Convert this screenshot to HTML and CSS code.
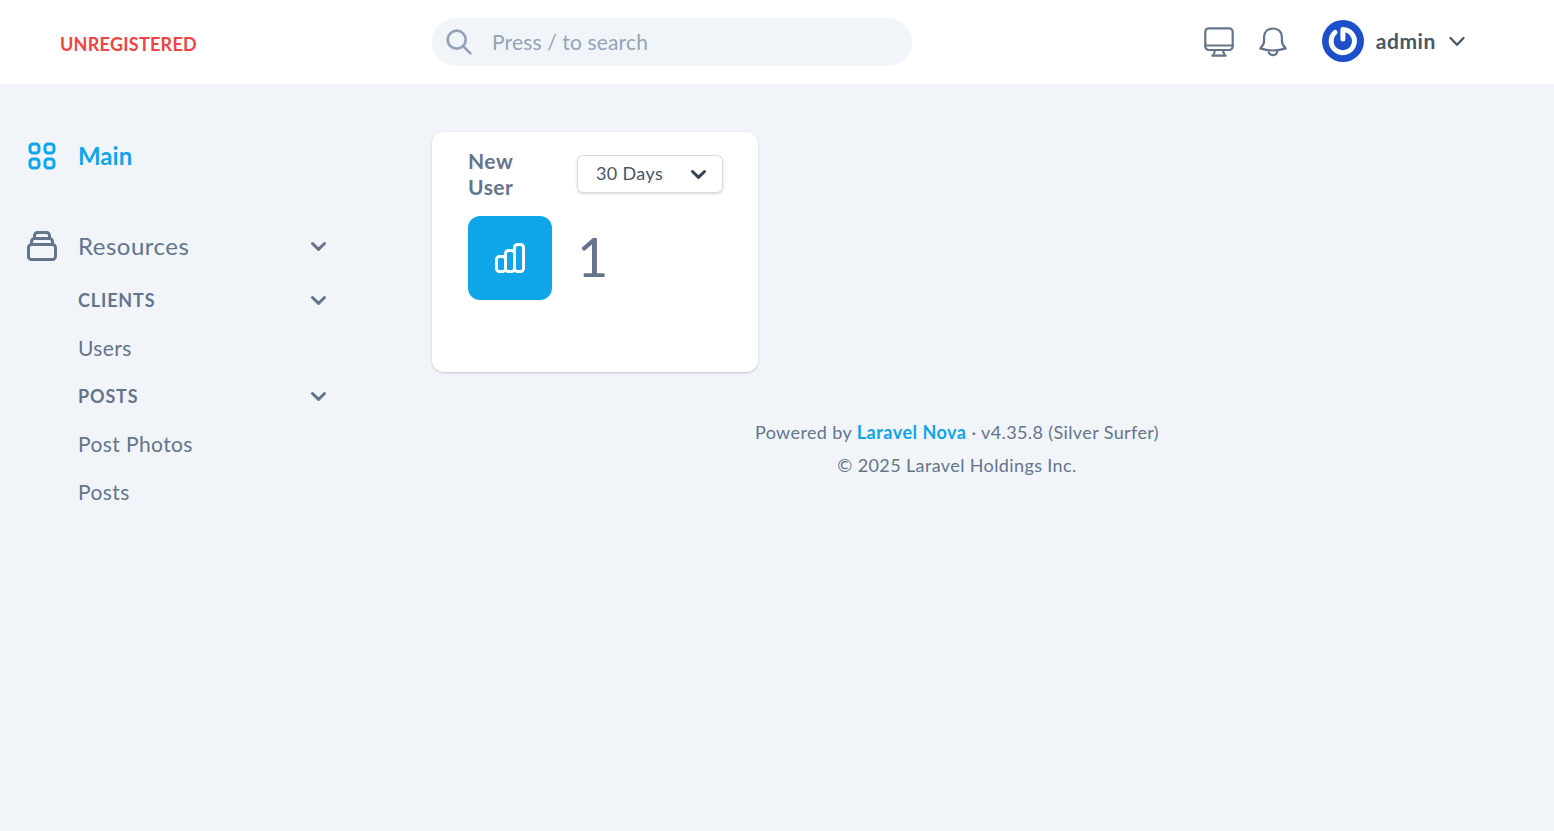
FILE: index.html
```html
<!DOCTYPE html>
<html lang="en">
<head>
<meta charset="utf-8">
<title>Main</title>
<link rel="stylesheet" href="styles.css">
</head>
<body>
<header class="topbar">
  <div class="brand">UNREGISTERED</div>
  <div class="search">
    <svg class="search-icon" width="30" height="30" viewBox="0 0 30 30"><circle cx="12.7" cy="12.7" r="9"/><path d="M19.200 19.200l7.200 7.200"/></svg>
    <span class="search-text">Press / to search</span>
  </div>
  <div class="tools">
    <svg class="tool-icon" width="36" height="36" viewBox="0 0 36 36"><rect x="4.300" y="4.300" width="27.400" height="21.700" rx="3.500"/><path d="M4.300 21.500h27.400M14 26.500l-1.600 5M22 26.500l1.600 5M11.300 31.700h13.400"/></svg>
    <svg class="tool-icon bell" width="36" height="36" viewBox="0 0 36 36"><path d="M18 4.500c-5.500 0-8.900 3.500-8.900 8.500v4c0 3-1.700 5.400-3.800 7.400 7.500 2.600 17.900 2.600 25.400 0-2.100-2-3.800-4.400-3.800-7.400v-4c0-5-3.400-8.500-8.900-8.500zM13.400 26.700c.4 2.900 2.300 4.500 4.600 4.500s4.200-1.600 4.600-4.500"/></svg>
    <svg class="avatar" width="42" height="42" viewBox="0 0 42 42"><circle class="avatar-bg" cx="21" cy="21" r="21"/><path class="avatar-ring" d="M13 12.500A11.600 11.600 0 1 0 20.900 9.500v9.500"/></svg>
    <span class="user-name">admin</span>
    <svg class="user-arrow" width="18" height="18" viewBox="0 0 18 18"><path d="M2.500 5l6.500 6.700 6.500-6.700"/></svg>
  </div>
</header>
<div class="layout">
  <nav class="sidebar">
    <a class="nav-main active">
      <svg class="nav-icon" width="36" height="36" viewBox="0 0 24 24"><path d="M4 6a2 2 0 012-2h2a2 2 0 012 2v2a2 2 0 01-2 2H6a2 2 0 01-2-2V6zM14 6a2 2 0 012-2h2a2 2 0 012 2v2a2 2 0 01-2 2h-2a2 2 0 01-2-2V6zM4 16a2 2 0 012-2h2a2 2 0 012 2v2a2 2 0 01-2 2H6a2 2 0 01-2-2v-2zM14 16a2 2 0 012-2h2a2 2 0 012 2v2a2 2 0 01-2 2h-2a2 2 0 01-2-2v-2z"/></svg>
      <span class="nav-label">Main</span>
    </a>
    <a class="nav-main resources">
      <svg class="nav-icon" width="36" height="36" viewBox="0 0 24 24"><path d="M19 11H5m14 0a2 2 0 012 2v6a2 2 0 01-2 2H5a2 2 0 01-2-2v-6a2 2 0 012-2m14 0V9a2 2 0 00-2-2M5 11V9a2 2 0 012-2m0 0V5a2 2 0 012-2h6a2 2 0 012 2v2M7 7h10"/></svg>
      <span class="nav-label">Resources</span>
      <svg class="arrow" width="18" height="18" viewBox="0 0 18 18"><path d="M2.500 6.500l6 5.800 6-5.800"/></svg>
    </a>
    <div class="nav-group"><span>CLIENTS</span><svg class="arrow" width="18" height="18" viewBox="0 0 18 18"><path d="M2.500 6.500l6 5.800 6-5.800"/></svg></div>
    <a class="nav-item">Users</a>
    <div class="nav-group"><span>POSTS</span><svg class="arrow" width="18" height="18" viewBox="0 0 18 18"><path d="M2.500 6.500l6 5.800 6-5.800"/></svg></div>
    <a class="nav-item">Post Photos</a>
    <a class="nav-item">Posts</a>
  </nav>
  <main class="content">
    <section class="card">
      <div class="card-head">
        <h3 class="card-title">New User</h3>
        <div class="select"><span class="select-text">30 Days</span><svg class="arrow dark" width="18" height="18" viewBox="0 0 18 18"><path d="M2.500 6.500l6 5.800 6-5.800"/></svg></div>
      </div>
      <div class="card-body">
        <div class="metric-icon"><svg width="36" height="36" viewBox="0 0 24 24"><path d="M9 19v-6a2 2 0 00-2-2H5a2 2 0 00-2 2v6a2 2 0 002 2h2a2 2 0 002-2zm0 0V9a2 2 0 012-2h2a2 2 0 012 2v10m-6 0a2 2 0 002 2h2a2 2 0 002-2m0 0V5a2 2 0 012-2h2a2 2 0 012 2v14a2 2 0 01-2 2h-2a2 2 0 01-2-2z"/></svg></div>
        <span class="metric-value">1</span>
      </div>
    </section>
    <footer class="footer">
      <p class="powered">Powered by <a class="footer-link">Laravel Nova</a> · v4.35.8 (Silver Surfer)</p>
      <p class="copyright">© 2025 Laravel Holdings Inc.</p>
    </footer>
  </main>
</div>
</body>
</html>
```
FILE: styles.css
```css
* { box-sizing: border-box; }
body {
  margin: 0;
  min-height: 100vh;
  background: #f1f5f9;
  color: #64748b;
  font-family: Lato, "Noto Sans", sans-serif;
  font-size: 21px;
}
svg { flex: none; fill: none; stroke: currentColor; stroke-linecap: round; stroke-linejoin: round; }
.topbar { display: flex; align-items: center; height: 84px; background: #fff; padding-right: 88px; }
.brand { width: 432px; padding: 3px 0 0 60px; color: #ef4444; font-size: 18px; font-weight: 700; letter-spacing: .25px; }
.search { display: flex; align-items: center; gap: 18px; width: 480px; height: 48px; padding-left: 12px; border-radius: 24px; background: #f1f5f9; color: #94a3b8; }
.search-icon { stroke-width: 2.7; }
.search-text { padding-bottom: 2px; letter-spacing: .15px; }
.tools { display: flex; align-items: center; margin-left: auto; }
.tool-icon { stroke-width: 2.2; }
.bell { margin-left: 18px; }
.avatar { margin: -2px 0 0 31px; }
.avatar-bg { fill: #1c4fc9; stroke: none; }
.avatar-ring { stroke: #fff; stroke-width: 5; }
.user-name { margin-left: 12px; padding-bottom: 4px; color: #475569; font-weight: 700; letter-spacing: .6px; }
.user-arrow { margin-left: 12px; color: #475569; stroke-width: 2.3; }
.layout { display: flex; }
.sidebar { width: 432px; padding: 48px 104px 0 24px; }
.nav-main { display: flex; align-items: center; height: 48px; font-size: 24px; letter-spacing: .5px; }
.nav-icon { stroke-width: 2; }
.nav-label { margin-left: 18px; padding-bottom: 2px; flex: 1; }
.active { color: #0ea5e9; font-weight: 700; letter-spacing: 0; }
.resources { margin-top: 42px; margin-bottom: 6px; }
.arrow { stroke-width: 3; }
.nav-group { display: flex; align-items: center; justify-content: space-between; height: 48px; padding-left: 54px; font-size: 18px; font-weight: 700; letter-spacing: .85px; }
.nav-item { display: flex; align-items: center; height: 48px; padding: 0 0 2px 54px; letter-spacing: .4px; }
.content { flex: 1; padding: 48px 72px 0 0; }
.card { width: 326px; height: 240px; padding: 16px 35px 0 36px; border-radius: 12px; background: #fff; box-shadow: 0 1px 3px rgba(0,0,0,.12), 0 1px 2px rgba(0,0,0,.08); }
.card-head { display: flex; align-items: center; justify-content: space-between; height: 52px; }
.card-title { width: 80px; margin: 0; padding-bottom: 1px; font-size: 21px; line-height: 26px; font-weight: 700; letter-spacing: .5px; }
.select { display: flex; align-items: center; justify-content: space-between; width: 146px; height: 38px; padding: 0 15px 0 19px; border-radius: 6px; background: #fff; color: #475569; font-size: 18px; letter-spacing: .35px; box-shadow: inset 0 0 0 1px #d9dce0, 0 1px 3px rgba(0,0,0,.16); }
.select-text { padding-bottom: 2px; }
.dark { color: #334155; }
.card-body { display: flex; align-items: center; gap: 25px; margin-top: 16px; }
.metric-icon { display: grid; place-items: center; width: 84px; height: 84px; border-radius: 12px; background: #0ea5e9; color: #fff; stroke-width: 2; }
.metric-value { padding-bottom: 3px; font-size: 54px; line-height: 54px; }
.footer { margin-top: 44px; text-align: center; font-size: 18px; line-height: 33px; letter-spacing: .38px; }
.footer p { margin: 0; }
.footer-link { color: #0ea5e9; font-weight: 700; letter-spacing: .5px; }
```
